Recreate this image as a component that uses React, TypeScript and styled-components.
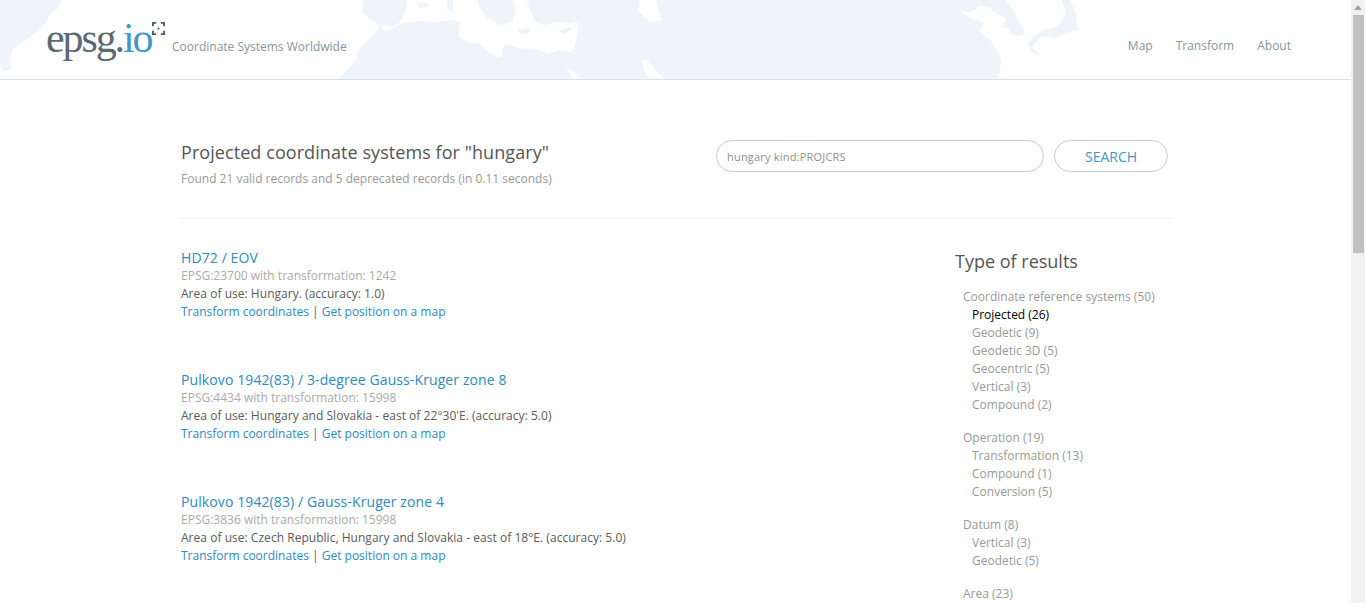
import React from 'react';
import styled, { createGlobalStyle } from 'styled-components';

const GlobalStyle = createGlobalStyle`
  html, body {
    margin: 0;
    padding: 0;
    height: 100%;
    overflow: hidden;
    background: #fff;
    font-family: "Open Sans", "Liberation Sans", sans-serif;
  }
`;

const results = [
  {
    title: 'HD72 / EOV',
    code: 'EPSG:23700 with transformation: 1242',
    area: 'Area of use: Hungary. (accuracy: 1.0)',
  },
  {
    title: 'Pulkovo 1942(83) / 3-degree Gauss-Kruger zone 8',
    code: 'EPSG:4434 with transformation: 15998',
    area: 'Area of use: Hungary and Slovakia - east of 22°30\'E. (accuracy: 5.0)',
  },
  {
    title: 'Pulkovo 1942(83) / Gauss-Kruger zone 4',
    code: 'EPSG:3836 with transformation: 15998',
    area: 'Area of use: Czech Republic, Hungary and Slovakia - east of 18°E. (accuracy: 5.0)',
  },
];

const facets = [
  {
    label: 'Coordinate reference systems (50)',
    items: ['Projected (26)', 'Geodetic (9)', 'Geodetic 3D (5)', 'Geocentric (5)', 'Vertical (3)', 'Compound (2)'],
  },
  { label: 'Operation (19)', items: ['Transformation (13)', 'Compound (1)', 'Conversion (5)'] },
  { label: 'Datum (8)', items: ['Vertical (3)', 'Geodetic (5)'] },
  { label: 'Area (23)', items: [] },
];

const WorldMap = () => (
  <MapSvg viewBox="0 0 1351 79" preserveAspectRatio="none">
    <path
      fill="#eef4f9"
      d="M0 0H62L57 9 50 14 46 23 38 31 27 39 13 49 10 58 11 70 3 71 0 66Z"
    />
    <path
      fill="#eef4f9"
      d="M363 0H1005L1012 8 1018 20 1026 34 1018 36 1012 35 1010 30 1003 26 1006 18 997 14 990 8 980 6 972 12 962 12 969 18 980 21 985 23 979 31 990 40 997 50 1001 60 1000 70 997 79H338L345 72 356 60 358 50 368 40 378 30 379 24 368 18 362 12Z"
    />
    <path
      fill="#eef4f9"
      d="M1062 0H1070L1076 14 1078 30 1068 32 1055 38 1042 36 1032 46 1040 56 1032 52 1028 44 1034 36 1044 30 1058 26 1066 14Z"
    />
    <path
      fill="#fff"
      d="M382 25L392 27 400 22 406 10 407 0H447L447 9 453 14 453 0H477L480 8 487 18 500 25 513 22 515 8 513 0H527L530 10 535 22 545 25 556 22 570 24 578 22 578 32 574 48 570 52 560 50 548 54 540 50 520 48 506 44 502 48 503 56 498 58 486 50 480 44 472 43 460 38 458 30 460 22 452 20 436 22 420 21 400 24 392 29 383 30Z"
    />
    <path fill="#eef4f9" d="M416 3L426 2 430 6 420 8Z" />
    <path fill="#eef4f9" d="M518 30L532 28 528 33 520 34Z" />
    <path fill="#eef4f9" d="M560 30L572 27 566 34 560 33Z" />
    <path fill="#fff" d="M640 0H656L659 12 662 20 652 22 644 17 638 11Z" />
    <path fill="#fff" d="M566 65L570 70 575 72 582 79H572Z" />
    <path fill="#fff" d="M642 60L648 61 654 68 662 77 666 79H650L644 70Z" />
  </MapSvg>
);

const CornerMark = () => (
  <MarkSvg viewBox="0 0 14 14">
    <path
      fill="none"
      stroke="#4e5a60"
      strokeWidth="2"
      d="M1 4.500V1H4.500M9.500 1H13V4.500M13 9.500V13H9.500M4.500 13H1V9.500"
    />
    <path fill="none" stroke="#8b959a" strokeWidth="1" d="M7 5V9M5 7H9" />
  </MarkSvg>
);

export default function App() {
  return (
    <Shell>
      <GlobalStyle />
      <Page>
        <Header>
          <WorldMap />
          <Brand>
            <Logo>
              epsg.<LogoAccent>io</LogoAccent>
              <CornerMark />
            </Logo>
            <Tagline>Coordinate Systems Worldwide</Tagline>
          </Brand>
          <Nav>
            <NavLink>Map</NavLink>
            <NavLink>Transform</NavLink>
            <NavLink>About</NavLink>
          </Nav>
        </Header>
        <Container>
          <SearchRow>
            <div>
              <Heading>Projected coordinate systems for "hungary"</Heading>
              <Found>Found 21 valid records and 5 deprecated records (in 0.11 seconds)</Found>
            </div>
            <SearchForm>
              <SearchInput readOnly value="hungary kind:PROJCRS" />
              <SearchButton>SEARCH</SearchButton>
            </SearchForm>
          </SearchRow>
          <Columns>
            <ResultList>
              {results.map((r) => (
                <Result key={r.code}>
                  <ResultTitle>{r.title}</ResultTitle>
                  <Code>{r.code}</Code>
                  <Area>{r.area}</Area>
                  <Links>
                    <ResultLink>Transform coordinates</ResultLink> | <ResultLink>Get position on a map</ResultLink>
                  </Links>
                </Result>
              ))}
            </ResultList>
            <Sidebar>
              <SideHeading>Type of results</SideHeading>
              {facets.map((f) => (
                <Facet key={f.label}>
                  <FacetLabel>{f.label}</FacetLabel>
                  {f.items.map((item) => (
                    <FacetItem key={item} $active={item.startsWith('Projected')}>
                      {item}
                    </FacetItem>
                  ))}
                </Facet>
              ))}
            </Sidebar>
          </Columns>
        </Container>
      </Page>
      <Scrollbar>
        <ScrollArrow />
        <ScrollThumb />
      </Scrollbar>
    </Shell>
  );
}

const Shell = styled.div`
  display: flex;
  height: 603px;
  overflow: hidden;
`;

const Page = styled.div`
  flex: 1;
  min-width: 0;
`;

const Header = styled.header`
  position: relative;
  height: 79px;
  display: flex;
  justify-content: space-between;
  border-bottom: 1px solid #d6e1ea;
  overflow: hidden;
`;

const MapSvg = styled.svg`
  position: absolute;
  inset: 0;
  width: 100%;
  height: 100%;
`;

const Brand = styled.div`
  position: relative;
  display: flex;
  align-items: flex-start;
  padding-left: 46px;
`;

const Logo = styled.div`
  position: relative;
  width: 126px;
  margin-top: 13px;
  font-family: "Liberation Serif", serif;
  font-size: 42px;
  line-height: 50px;
  letter-spacing: -2.1px;
  color: #5b6a72;
`;

const LogoAccent = styled.span`
  color: #4197cb;
`;

const MarkSvg = styled.svg`
  position: absolute;
  left: 106px;
  top: 9px;
  width: 13px;
  height: 13px;
`;

const Tagline = styled.div`
  margin-top: 38px;
  font-size: 12px;
  line-height: 18px;
  color: #8496a3;
`;

const Nav = styled.nav`
  position: relative;
  display: flex;
  gap: 23px;
  padding: 37px 60px 0 0;
`;

const NavLink = styled.a`
  font-size: 12px;
  line-height: 18px;
  color: #8496a3;
`;

const Container = styled.main`
  width: 990px;
  margin-left: 181px;
`;

const SearchRow = styled.section`
  display: flex;
  justify-content: space-between;
  height: 78px;
  padding-top: 60px;
  border-bottom: 1px solid #eee;
`;

const Heading = styled.h1`
  margin: 0;
  font-size: 18px;
  font-weight: 400;
  line-height: 24px;
  letter-spacing: 0.07px;
  color: #555;
`;

const Found = styled.p`
  margin: 6px 0 0;
  font-size: 12px;
  line-height: 18px;
  color: #999;
`;

const SearchForm = styled.form`
  display: flex;
  gap: 10px;
  width: 455px;
  height: 32px;
`;

const SearchInput = styled.input`
  box-sizing: border-box;
  width: 328px;
  height: 32px;
  padding: 0 10px;
  border: 1px solid #ccc;
  border-radius: 16px;
  outline: none;
  font-family: inherit;
  font-size: 11px;
  letter-spacing: 0.2px;
  color: #8f8f8f;
`;

const SearchButton = styled.button`
  box-sizing: border-box;
  width: 114px;
  height: 32px;
  padding: 0;
  border: 1px solid #ccc;
  border-radius: 16px;
  background: #fff;
  font-family: inherit;
  font-size: 14px;
  color: #4197cb;
`;

const Columns = styled.section`
  display: flex;
  justify-content: space-between;
`;

const ResultList = styled.div`
  padding-top: 30px;
`;

const Result = styled.article`
  height: 122px;
  font-size: 12px;
  line-height: 18px;
`;

const ResultTitle = styled.a`
  display: block;
  font-size: 14px;
  line-height: 18px;
  letter-spacing: 0.1px;
  color: #2e8ac0;
`;

const Code = styled.div`
  color: #aaa;
`;

const Area = styled.div`
  letter-spacing: 0.03px;
  color: #5a5a5a;
`;

const Links = styled.div`
  color: #5a5a5a;
`;

const ResultLink = styled.a`
  color: #2e8ac0;
`;

const Sidebar = styled.aside`
  width: 216px;
  padding-top: 30px;
`;

const SideHeading = styled.h2`
  margin: 0 0 15px;
  font-size: 18px;
  font-weight: 400;
  line-height: 24px;
  color: #555;
`;

const Facet = styled.div`
  padding-left: 8px;
  margin-bottom: 15px;
  font-size: 12px;
  line-height: 18px;
`;

const FacetLabel = styled.div`
  color: #999;
`;

const FacetItem = styled.div<{ $active?: boolean }>`
  padding-left: 9px;
  color: ${(p) => (p.$active ? '#000' : '#999')};
`;

const Scrollbar = styled.div`
  flex: none;
  width: 14px;
  background: #f1f1f1;
`;

const ScrollArrow = styled.div`
  width: 0;
  height: 0;
  margin: 5px 0 0 3px;
  border-left: 4px solid transparent;
  border-right: 4px solid transparent;
  border-bottom: 5px solid #a3a3a3;
`;

const ScrollThumb = styled.div`
  width: 11px;
  height: 238px;
  margin: 5px 0 0 2px;
  background: #c1c1c1;
`;
